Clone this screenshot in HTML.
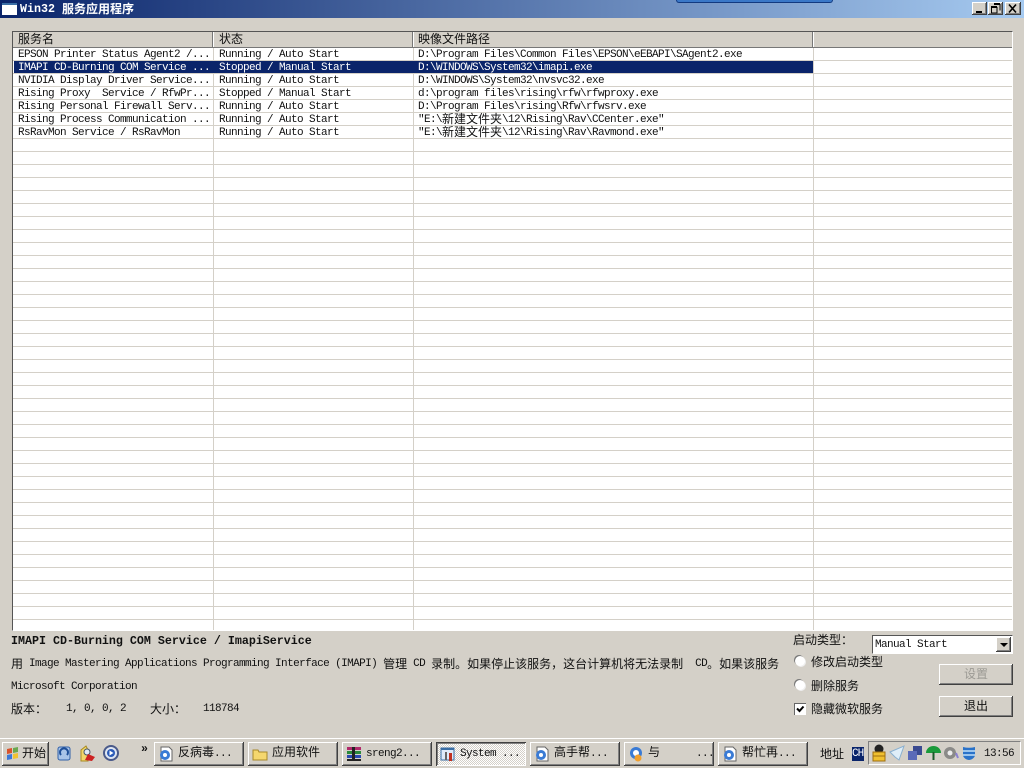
<!DOCTYPE html>
<html lang="zh-CN">
<head>
<meta charset="utf-8">
<title>Win32 服务应用程序</title>
<style>
html,body{margin:0;padding:0;width:1024px;height:768px;overflow:hidden;background:#d4d0c8}
body{position:relative;font:11px/13px "Liberation Mono","Noto Sans CJK SC",monospace;letter-spacing:-.6px;color:#111}
div,span.a{position:absolute;white-space:pre}
u{text-decoration:none;letter-spacing:0;font-family:"Noto Sans CJK SC","WenQuanYi Zen Hei",sans-serif;font-size:12px;line-height:0;position:relative;top:2px}
.t{height:13px;line-height:13px;margin-top:1px}
.hd{height:15px;line-height:15px;top:32px}
.sel{color:#fff}
.b{background:#d4d0c8;box-shadow:inset -1px -1px 0 #404040,inset 1px 1px 0 #fff,inset -2px -2px 0 #808080}
.tb{top:742px;height:24px;width:90px;background:#d4d0c8;box-shadow:inset -1px -1px 0 #404040,inset 1px 1px 0 #fff,inset -2px -2px 0 #808080;line-height:23px}
.tb span{position:absolute;left:24px;top:1px}
.tb u{top:0}
.tb svg{position:absolute;left:4px;top:4px}
.bold{font-weight:bold;font-size:11.67px;letter-spacing:0}
.rd{width:10px;height:10px;border-radius:50%;background:#fff;box-shadow:-1px -1px 0 #777,1px 1px 0 #eee}
</style>
</head>
<body>
<!-- Title bar -->
<div style="left:0;top:0;width:1024px;height:18px;background:linear-gradient(90deg,#0a246a 0,#a6caf0 100%)"></div>
<div style="left:676px;top:0;width:155px;height:2px;background:#3a78c8;border:1px solid #123a80;border-top:0;border-radius:0 0 6px 6px"></div>
<div style="left:2px;top:3px;width:15px;height:10px;background:#fff;border-top:2px solid #3a6ea5"></div>
<div class="bold" style="left:20px;top:3px;color:#fff;height:13px">Win32 <u style="font-weight:bold;top:1px">服务应用程序</u></div>
<div class="b" style="left:972px;top:2px;width:15px;height:13px"><div style="left:4px;top:9px;width:6px;height:2px;background:#000"></div></div>
<div class="b" style="left:988px;top:2px;width:15px;height:13px">
  <svg width="15" height="13" style="position:absolute;left:0;top:0"><path d="M6 2.500h6v6M6 1.500h6M3.500 5.500h5.500v5.500h-5.500zM3 4.500h6" fill="none" stroke="#000"/></svg>
</div>
<div class="b" style="left:1005px;top:2px;width:16px;height:13px">
  <svg width="16" height="13" style="position:absolute;left:0;top:0"><path d="M4 2.500l7 8M11 2.500l-7 8" stroke="#000" stroke-width="1.600"/></svg>
</div>

<!-- List -->
<div style="left:12px;top:31px;width:1001px;height:600px;background:#fff;border-left:1px solid #555;border-top:1px solid #555;border-right:1px solid #fff;border-bottom:1px solid #fff;box-sizing:border-box"></div>
<div style="left:13px;top:32px;width:999px;height:598px;background-image:repeating-linear-gradient(180deg,#fff 0,#fff 12px,#d4d0c8 12px,#d4d0c8 13px);background-position:0 16px"></div>
<div style="left:213px;top:32px;width:1px;height:598px;background:#d4d0c8"></div>
<div style="left:413px;top:32px;width:1px;height:598px;background:#d4d0c8"></div>
<div style="left:813px;top:32px;width:1px;height:598px;background:#d4d0c8"></div>
<div style="left:13px;top:32px;width:999px;height:15px;background:#d4d0c8;border-bottom:1px solid #777"></div>
<div style="left:212px;top:32px;width:1px;height:15px;background:#777;border-right:1px solid #fff"></div>
<div style="left:412px;top:32px;width:1px;height:15px;background:#777;border-right:1px solid #fff"></div>
<div style="left:812px;top:32px;width:1px;height:15px;background:#777;border-right:1px solid #fff"></div>
<div class="hd" style="left:18px"><u>服务名</u></div>
<div class="hd" style="left:219px"><u>状态</u></div>
<div class="hd" style="left:418px"><u>映像文件路径</u></div>

<!-- Selection -->
<div style="left:14px;top:61px;width:799px;height:12px;background:#0a246a"></div>

<!-- Rows -->
<div class="t" style="left:18px;top:48px">EPSON Printer Status Agent2 /...</div>
<div class="t" style="left:219px;top:48px">Running / Auto Start</div>
<div class="t" style="left:418px;top:48px">D:\Program Files\Common Files\EPSON\eEBAPI\SAgent2.exe</div>

<div class="t sel" style="left:18px;top:61px">IMAPI CD-Burning COM Service ...</div>
<div class="t sel" style="left:219px;top:61px">Stopped / Manual Start</div>
<div class="t sel" style="left:418px;top:61px">D:\WINDOWS\System32\imapi.exe</div>

<div class="t" style="left:18px;top:74px">NVIDIA Display Driver Service...</div>
<div class="t" style="left:219px;top:74px">Running / Auto Start</div>
<div class="t" style="left:418px;top:74px">D:\WINDOWS\System32\nvsvc32.exe</div>

<div class="t" style="left:18px;top:87px">Rising Proxy  Service / RfwPr...</div>
<div class="t" style="left:219px;top:87px">Stopped / Manual Start</div>
<div class="t" style="left:418px;top:87px">d:\program files\rising\rfw\rfwproxy.exe</div>

<div class="t" style="left:18px;top:100px">Rising Personal Firewall Serv...</div>
<div class="t" style="left:219px;top:100px">Running / Auto Start</div>
<div class="t" style="left:418px;top:100px">D:\Program Files\rising\Rfw\rfwsrv.exe</div>

<div class="t" style="left:18px;top:113px">Rising Process Communication ...</div>
<div class="t" style="left:219px;top:113px">Running / Auto Start</div>
<div class="t" style="left:418px;top:113px">"E:\<u style="top:1px">新建文件夹</u>\12\Rising\Rav\CCenter.exe"</div>

<div class="t" style="left:18px;top:126px">RsRavMon Service / RsRavMon</div>
<div class="t" style="left:219px;top:126px">Running / Auto Start</div>
<div class="t" style="left:418px;top:126px">"E:\<u style="top:1px">新建文件夹</u>\12\Rising\Rav\Ravmond.exe"</div>

<!-- Info -->
<div class="bold t" style="left:11px;top:634px">IMAPI CD-Burning COM Service / ImapiService</div>
<div class="t" style="left:11px;top:657px"><u>用</u> Image Mastering Applications Programming Interface (IMAPI) <u>管理</u> CD <u>录制。如果停止该服务，这台计算机将无法录制</u>  CD<u>。如果该服务</u></div>
<div class="t" style="left:11px;top:680px">Microsoft Corporation</div>
<div class="t" style="left:11px;top:702px"><u>版本：</u></div>
<div class="t" style="left:66px;top:702px">1, 0, 0, 2</div>
<div class="t" style="left:150px;top:702px"><u>大小：</u></div>
<div class="t" style="left:203px;top:702px">118784</div>

<!-- Right panel -->
<div class="t" style="left:793px;top:633px"><u>启动类型：</u></div>
<div style="left:872px;top:635px;width:141px;height:19px;background:#fff;box-sizing:border-box;border-left:1px solid #555;border-top:1px solid #555;border-right:1px solid #fff;border-bottom:1px solid #fff"></div>
<div class="t" style="left:875px;top:638px">Manual Start</div>
<div class="b" style="left:996px;top:637px;width:15px;height:15px"><div style="left:4px;top:6px;width:0;height:0;border:4px solid transparent;border-top:4px solid #000;border-bottom:0"></div></div>
<div class="rd" style="left:795px;top:656px"></div>
<div class="t" style="left:811px;top:655px"><u>修改启动类型</u></div>
<div class="rd" style="left:795px;top:680px"></div>
<div class="t" style="left:811px;top:679px"><u>删除服务</u></div>
<div style="left:794px;top:703px;width:12px;height:12px;background:#fff;box-shadow:inset 1px 1px 0 #666"></div>
<svg style="position:absolute;left:794px;top:703px" width="12" height="12"><path d="M3 5.500l2.500 2.500 4-4.500" fill="none" stroke="#000" stroke-width="2"/></svg>
<div class="t" style="left:811px;top:702px"><u>隐藏微软服务</u></div>
<div class="b" style="left:939px;top:664px;width:74px;height:21px;line-height:20px;text-align:center;color:#9c9a94"><u>设置</u></div>
<div class="b" style="left:939px;top:696px;width:74px;height:21px;line-height:20px;text-align:center"><u>退出</u></div>

<!-- Taskbar -->
<div style="left:0;top:738px;width:1024px;height:30px;background:#d4d0c8;border-top:1px solid #fff;box-sizing:border-box"></div>
<div class="b" style="left:2px;top:742px;width:47px;height:24px;line-height:22px"><span class="a" style="left:20px"><u>开始</u></span>
  <svg width="16" height="16" style="position:absolute;left:3px;top:4px"><path d="M2 3l5-1v5l-5 1z" fill="#d9532c"/><path d="M8 2l5-1v5l-5 1z" fill="#6aa84f"/><path d="M2 9l5-1v5l-5 1z" fill="#3c78d8"/><path d="M8 8l5-1v5l-5 1z" fill="#f1c232"/></svg>
</div>
<svg style="position:absolute;left:56px;top:745px" width="16" height="17"><rect x="2" y="2" width="12" height="13" rx="2" fill="#a9c4e8" stroke="#2f5fa8"/><path d="M5 10a4 4 0 1 1 6 0" fill="none" stroke="#1f4f98" stroke-width="2"/></svg>
<svg style="position:absolute;left:79px;top:744px" width="17" height="18"><path d="M2 17V6l5-4 2 4v11z" fill="#f2d76b" stroke="#a88a20"/><circle cx="8" cy="8" r="3" fill="#dfeaf8" stroke="#456"/><path d="M6 16l3-6 7 3-3 4z" fill="#cc2222"/></svg>
<svg style="position:absolute;left:103px;top:745px" width="16" height="16"><circle cx="8" cy="8" r="7" fill="#dfe6f2" stroke="#4a5a8a" stroke-width="2"/><circle cx="8" cy="8" r="4" fill="#2a5ab8"/><path d="M6.500 5.500l4 2.500-4 2.500z" fill="#fff"/></svg>
<div class="bold" style="left:141px;top:743px;height:13px;line-height:13px">»</div>

<div class="tb" style="left:154px"><svg width="16" height="16"><path d="M3 1h8l3 3v11H3z" fill="#fff" stroke="#666"/><circle cx="7" cy="9" r="5" fill="#3a7bd5"/><circle cx="7" cy="9" r="2" fill="#fff"/></svg><span><u>反病毒</u>...</span></div>
<div class="tb" style="left:248px"><svg width="16" height="16"><path d="M1 4h5l1 2h8v8H1z" fill="#f5d76e" stroke="#a8882a"/></svg><span><u>应用软件</u></span></div>
<div class="tb" style="left:342px"><svg width="16" height="16"><rect x="1" y="1" width="14" height="3" fill="#b02a6a"/><rect x="1" y="5" width="14" height="3" fill="#2a8a3a"/><rect x="1" y="9" width="14" height="3" fill="#2a4ab0"/><rect x="1" y="13" width="14" height="2" fill="#222"/><rect x="6" y="1" width="3" height="14" fill="#222"/></svg><span>sreng2...</span></div>
<div class="tb" style="left:436px;box-shadow:inset 1px 1px 0 #404040,inset -1px -1px 0 #fff,inset 2px 2px 0 #808080;background:#ece9e3 repeating-conic-gradient(#fff 0 25%,#d4d0c8 0 50%) 0 0/2px 2px"><svg width="16" height="16"><rect x="1" y="2" width="13" height="12" fill="#dfeaf8" stroke="#3a6ea5"/><rect x="1" y="2" width="13" height="2" fill="#3a6ea5"/><rect x="9" y="7" width="3" height="8" fill="#c03020"/><rect x="5" y="6" width="2" height="8" fill="#666"/></svg><span>System ...</span></div>
<div class="tb" style="left:530px"><svg width="16" height="16"><path d="M3 1h8l3 3v11H3z" fill="#fff" stroke="#666"/><circle cx="7" cy="9" r="5" fill="#3a7bd5"/><circle cx="7" cy="9" r="2" fill="#fff"/></svg><span><u>高手帮</u>...</span></div>
<div class="tb" style="left:624px"><svg width="16" height="16"><circle cx="8" cy="7" r="6" fill="#3a7bd5"/><circle cx="8" cy="7" r="3" fill="#fff"/><circle cx="10" cy="12" r="3.500" fill="#f0a030"/></svg><span><u>与</u>      ...</span></div>
<div class="tb" style="left:718px"><svg width="16" height="16"><path d="M3 1h8l3 3v11H3z" fill="#fff" stroke="#666"/><circle cx="7" cy="9" r="5" fill="#3a7bd5"/><circle cx="7" cy="9" r="2" fill="#fff"/></svg><span><u>帮忙再</u>...</span></div>

<div class="t" style="left:820px;top:747px"><u>地址</u></div>
<div style="left:852px;top:747px;width:12px;height:14px;background:#0a246a;color:#fff;line-height:14px;font-size:11px;letter-spacing:-1px">CH</div>

<!-- Tray -->
<div style="left:868px;top:741px;width:153px;height:24px;box-sizing:border-box;border:1px solid;border-color:#808080 #fff #fff #808080"></div>
<svg style="position:absolute;left:871px;top:744px" width="16" height="18"><circle cx="8" cy="5" r="4.500" fill="#222"/><rect x="2" y="8" width="12" height="9" fill="#f0c030" stroke="#a07010"/><path d="M2 12h12" stroke="#a07010"/></svg>
<svg style="position:absolute;left:889px;top:745px" width="16" height="16"><path d="M1 7l14-6-5 14-4-3z" fill="#dfeef8" stroke="#8ab0d0"/></svg>
<svg style="position:absolute;left:907px;top:745px" width="16" height="16"><rect x="6" y="1" width="9" height="9" fill="#3a4a90"/><rect x="1" y="6" width="9" height="9" fill="#5a6ab8"/></svg>
<svg style="position:absolute;left:925px;top:745px" width="17" height="16"><path d="M1 8a7.500 7 0 0 1 15 0z" fill="#1a9a3a"/><path d="M8.500 7v8" stroke="#1a5a2a" stroke-width="2"/></svg>
<svg style="position:absolute;left:943px;top:745px" width="16" height="16"><circle cx="7" cy="8" r="6" fill="#8a8a88"/><circle cx="7" cy="8" r="2.500" fill="#eee"/><path d="M13 8l2 5" stroke="#8a80d0" stroke-width="2"/></svg>
<svg style="position:absolute;left:961px;top:745px" width="16" height="16"><path d="M2 2c4 1 8 1 12 0v8c0 3-4 5-6 5s-6-2-6-5z" fill="#2a72c8"/><path d="M2 6h12M2 10h12" stroke="#bfe0f8" stroke-width="1.500"/></svg>
<div class="t" style="left:984px;top:747px">13:56</div>
</body>
</html>
